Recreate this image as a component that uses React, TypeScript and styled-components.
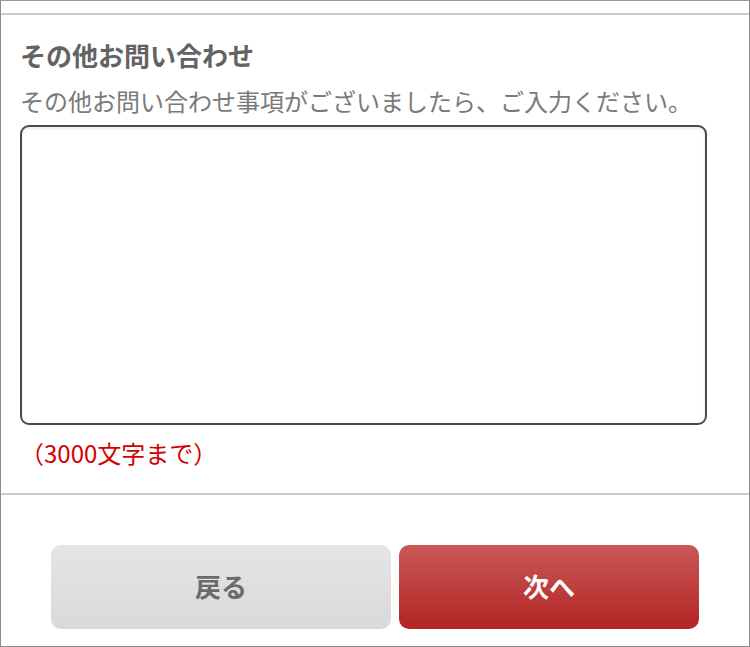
import styled, { createGlobalStyle } from 'styled-components';

const GlobalStyle = createGlobalStyle`
  html, body {
    margin: 0;
    padding: 0;
    background: #fff;
  }
  body {
    font-family: "Noto Sans CJK JP", "Noto Sans", sans-serif;
  }
  * {
    box-sizing: border-box;
  }
`;

export default function App() {
  return (
    <>
      <GlobalStyle />
      <Frame>
        <TopEdge />
        <Section>
          <Heading>その他お問い合わせ</Heading>
          <Description>その他お問い合わせ事項がございましたら、ご入力ください。</Description>
          <TextBox />
          <Note>（3000文字まで）</Note>
        </Section>
        <Footer>
          <BackButton>戻る</BackButton>
          <NextButton>次へ</NextButton>
        </Footer>
      </Frame>
    </>
  );
}

const Frame = styled.div`
  width: 750px;
  height: 647px;
  border: 1px solid #8a8a8a;
  border-top-color: #9a9a9a;
  display: flex;
  flex-direction: column;
  overflow: hidden;
`;

const TopEdge = styled.div`
  height: 14px;
  border-bottom: 2px solid #cccccc;
`;

const Section = styled.div`
  display: flex;
  flex-direction: column;
  padding: 27px 19px 28px;
  border-bottom: 2px solid #cccccc;
`;

const Heading = styled.h2`
  margin: 0;
  font-size: 26px;
  line-height: 26px;
  font-weight: 700;
  color: #636363;
`;

const Description = styled.p`
  margin: 21px 0 0;
  font-size: 24px;
  line-height: 24px;
  color: #7a7a7a;
  white-space: nowrap;
`;

const TextBox = styled.textarea`
  margin-top: 12px;
  width: 687px;
  height: 300px;
  border: 2px solid #4a4a4a;
  border-radius: 9px;
  background: #fff;
  box-shadow: inset 0 2px 3px rgba(0, 0, 0, 0.08);
  resize: none;
  outline: none;
  font-family: inherit;
  font-size: 20px;
  padding: 8px;
`;

const Note = styled.p`
  margin: 16px 0 0;
  font-size: 24px;
  line-height: 24px;
  color: #d40000;
`;

const Footer = styled.div`
  display: flex;
  gap: 8px;
  padding: 50px 0 0 50px;
`;

const Button = styled.button`
  height: 84px;
  border: none;
  border-radius: 10px;
  padding: 0 0 3px;
  font-family: inherit;
  font-size: 26px;
  font-weight: 700;
  display: flex;
  align-items: center;
  justify-content: center;
  cursor: pointer;
`;

const BackButton = styled(Button)`
  width: 340px;
  color: #6a6a6a;
  background: linear-gradient(to bottom, #e5e5e5, #d9d9d9);
`;

const NextButton = styled(Button)`
  width: 300px;
  color: #fff;
  background: linear-gradient(to bottom, #c95858, #b42424);
`;
